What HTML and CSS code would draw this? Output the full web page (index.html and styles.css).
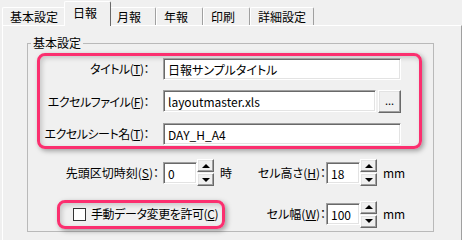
FILE: index.html
```html
<!DOCTYPE html>
<html>
<head>
  <meta charset="utf-8">
  <link rel="stylesheet" href="styles.css">
</head>
<body>
  <div class="tabs">
    <div class="tab">基本設定</div>
    <div class="tab active">日報</div>
    <div class="tab">月報</div>
    <div class="tab">年報</div>
    <div class="tab">印刷</div>
    <div class="tab">詳細設定</div>
  </div>

  <div class="panel">
    <fieldset class="group">
      <legend>基本設定</legend>

      <div class="highlight files">
        <label class="lbl">タイトル(<u>T</u>)：</label>
        <div class="field"><div class="edit">日報サンプルタイトル</div></div>

        <label class="lbl">エクセルファイル(<u>F</u>)：</label>
        <div class="field">
          <div class="edit">layoutmaster.xls</div>
          <div class="btn browse">...</div>
        </div>

        <label class="lbl">エクセルシート名(<u>T</u>)：</label>
        <div class="field"><div class="edit">DAY_H_A4</div></div>
      </div>

      <div class="spins">
        <label class="lbl left">先頭区切時刻(<u>S</u>)：</label>
        <div class="spin">
          <div class="edit">0</div>
          <div class="spin-btns">
            <div class="btn"><span class="arrow up"></span></div>
            <div class="btn"><span class="arrow down"></span></div>
          </div>
        </div>
        <span class="unit">時</span>
        <label class="lbl right">セル高さ(<u>H</u>)：</label>
        <div class="spin">
          <div class="edit">18</div>
          <div class="spin-btns">
            <div class="btn"><span class="arrow up"></span></div>
            <div class="btn"><span class="arrow down"></span></div>
          </div>
        </div>
        <span class="unit">mm</span>

        <div class="highlight check">
          <span class="box"></span>
          <span class="check-text">手動データ変更を許可(<u>C</u>)</span>
        </div>
        <label class="lbl right">セル幅(<u>W</u>)：</label>
        <div class="spin">
          <div class="edit">100</div>
          <div class="spin-btns">
            <div class="btn"><span class="arrow up"></span></div>
            <div class="btn"><span class="arrow down"></span></div>
          </div>
        </div>
        <span class="unit">mm</span>
      </div>
    </fieldset>
  </div>
</body>
</html>
```

FILE: styles.css
```css
body {
  margin: 0;
  width: 462px;
  height: 240px;
  overflow: hidden;
  background: #f0f0f0;
  font-family: "Noto Sans CJK JP", sans-serif;
  font-size: 12px;
  font-feature-settings: "palt";
  color: #000;
}
u {
  text-decoration: underline;
  text-underline-offset: 1px;
}

/* tab strip */
.tabs {
  display: flex;
  align-items: flex-end;
  height: 25px;
  padding-left: 2px;
}
.tab {
  box-sizing: border-box;
  height: 18px;
  min-width: 47px;
  padding: 1px 7px 0;
  line-height: 16px;
  border: 1px solid;
  border-color: #fff #a0a0a0 transparent #fff;
  border-bottom: none;
  border-radius: 2px 2px 0 0;
}
.tab.active {
  position: relative;
  z-index: 1;
  height: 25px;
  margin: 0 -2px -1px;
  padding: 3px 8px 0;
  background: #f0f0f0;
  border-right-color: #696969;
}

/* page body */
.panel {
  box-sizing: border-box;
  width: 460px;
  height: 260px;
  margin-left: 2px;
  border-top: 1px solid #fff;
  border-left: 1px solid #fff;
  border-right: 1px solid #a0a0a0;
}
.group {
  box-sizing: border-box;
  width: 407px;
  height: 196px;
  margin: 10px 0 0 24px;
  padding: 0;
  border: 1px solid #b9b9b9;
}
.group legend {
  margin-left: 3px;
  padding: 0 2px;
  line-height: 14px;
}

.lbl {
  line-height: 16px;
  text-align: right;
  white-space: nowrap;
}

/* controls */
.edit {
  box-sizing: border-box;
  height: 22px;
  padding: 2px 4px 0;
  line-height: 17px;
  background: #fff;
  border: 1px solid;
  border-color: #a0a0a0 #fff #fff #a0a0a0;
  box-shadow: inset 1px 1px #696969, inset -1px -1px #e3e3e3;
  white-space: nowrap;
  overflow: hidden;
}
.btn {
  box-sizing: border-box;
  background: #f0f0f0;
  border: 1px solid;
  border-color: #fff #696969 #696969 #fff;
  box-shadow: inset -1px -1px #a0a0a0, inset 1px 1px #e3e3e3;
  display: flex;
  align-items: center;
  justify-content: center;
}

/* pink callouts */
.highlight {
  box-sizing: border-box;
  border: 3px solid #fb2f6f;
  border-radius: 8px;
  box-shadow: 2px 2px 5px rgba(0, 0, 0, 0.35), inset 2px 2px 5px rgba(0, 0, 0, 0.18);
}
.files {
  width: 385px;
  margin: 3px 0 0 9px;
  padding: 2px 18px 1px 0;
  display: grid;
  grid-template-columns: 109px 1fr;
  column-gap: 14px;
  row-gap: 10px;
  align-items: center;
}
.files .lbl {
  letter-spacing: -0.5px;
}
.field {
  display: flex;
}
.field .edit {
  flex: 1;
}
.browse {
  width: 23px;
  height: 23px;
  margin-left: 2px;
  font-size: 11px;
  line-height: 10px;
  padding-bottom: 3px;
}

/* spin rows */
.spins {
  margin-top: 10px;
  display: grid;
  grid-template-columns: 135px 51px 1fr 84px 51px 56px;
  grid-template-rows: 27px 30px;
  row-gap: 13px;
  align-items: center;
}
.lbl.left {
  padding-right: 4px;
}
.spin {
  display: flex;
  align-items: center;
}
.spin .edit {
  width: 34px;
  padding-left: 4px;
}
.spin-btns {
  display: flex;
  flex-direction: column;
  gap: 1px;
  width: 17px;
}
.spin-btns .btn {
  height: 13px;
}
.arrow {
  width: 0;
  height: 0;
  border-left: 4px solid transparent;
  border-right: 4px solid transparent;
}
.arrow.up {
  border-bottom: 4px solid #000;
}
.arrow.down {
  border-top: 4px solid #000;
}
.unit {
  padding-left: 6px;
  line-height: 16px;
}

.check {
  grid-column: 1 / 4;
  justify-self: start;
  width: 168px;
  height: 29px;
  margin-left: 29px;
  padding-left: 13px;
  display: flex;
  align-items: center;
  gap: 5px;
  line-height: 16px;
  white-space: nowrap;
}
.check-text {
  letter-spacing: -0.4px;
}
.check .box {
  flex: none;
  box-sizing: border-box;
  width: 13px;
  height: 13px;
  background: #fff;
  border: 1px solid #333;
}
```
